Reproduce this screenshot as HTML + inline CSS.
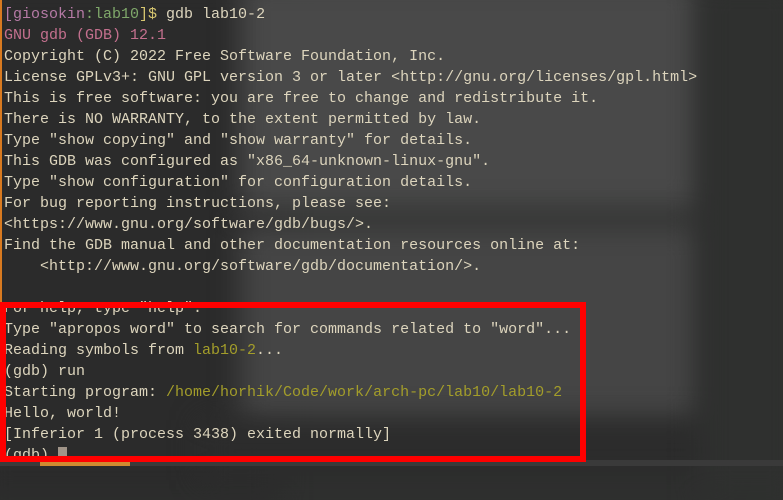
<!DOCTYPE html>
<html><head><meta charset="utf-8"><style>
html,body{margin:0;padding:0}
body{width:783px;height:466px;overflow:hidden;position:relative;background:#2f302f;font-family:"Liberation Mono",monospace;font-size:15px;}
.bg{position:absolute;filter:blur(14px)}
.t{position:absolute;left:4px;top:4px;line-height:21px;color:#ddd5bd;white-space:pre;letter-spacing:0}
.pk{color:#c4708e}.gr{color:#7fa86a}.yl{color:#d7c670}.ol{color:#a39d2a}.pu{color:#b57aa5}
</style></head><body>
<div class="bg" style="left:-20px;top:-20px;width:300px;height:520px;background:#2b2b2b"></div>
<div class="bg" style="left:240px;top:-20px;width:460px;height:230px;background:#494949"></div>
<div class="bg" style="left:240px;top:225px;width:460px;height:200px;background:#454545"></div>
<div class="bg" style="left:200px;top:420px;width:520px;height:60px;background:#2c2c2c"></div>
<div class="bg" style="left:700px;top:-20px;width:100px;height:520px;background:#2f302f"></div>
<div style="position:absolute;left:0;top:0;width:2px;height:466px;background:#d87a20"></div>
<div class="t"><span style="position:relative;top:-21px;display:block;height:0">[giosokin:lab10]$ gdb lab10-2</span><span class="pu">[giosokin</span><span class="gr">:lab10</span><span class="yl">]$</span> gdb lab10-2
<span class="pk">GNU gdb (GDB) 12.1</span>
Copyright (C) 2022 Free Software Foundation, Inc.
License GPLv3+: GNU GPL version 3 or later &lt;http://gnu.org/licenses/gpl.html&gt;
This is free software: you are free to change and redistribute it.
There is NO WARRANTY, to the extent permitted by law.
Type "show copying" and "show warranty" for details.
This GDB was configured as "x86_64-unknown-linux-gnu".
Type "show configuration" for configuration details.
For bug reporting instructions, please see:
&lt;https://www.gnu.org/software/gdb/bugs/&gt;.
Find the GDB manual and other documentation resources online at:
    &lt;http://www.gnu.org/software/gdb/documentation/&gt;.

For help, type "help".
Type "apropos word" to search for commands related to "word"...
Reading symbols from <span class="ol">lab10-2</span>...
(gdb) run
Starting program: <span class="ol">/home/horhik/Code/work/arch-pc/lab10/lab10-2</span>
Hello, world!
[Inferior 1 (process 3438) exited normally]
(gdb) <span style="background:#a09488">&#160;</span></div>
<div style="position:absolute;left:0;top:460px;width:783px;height:6px;background:#3a3a3a"></div>
<div style="position:absolute;left:40px;top:462px;width:90px;height:4px;background:#d08a30"></div>
<div style="position:absolute;left:0;top:302px;width:586px;height:160px;box-sizing:border-box;border:6px solid #ff0000"></div>
</body></html>
